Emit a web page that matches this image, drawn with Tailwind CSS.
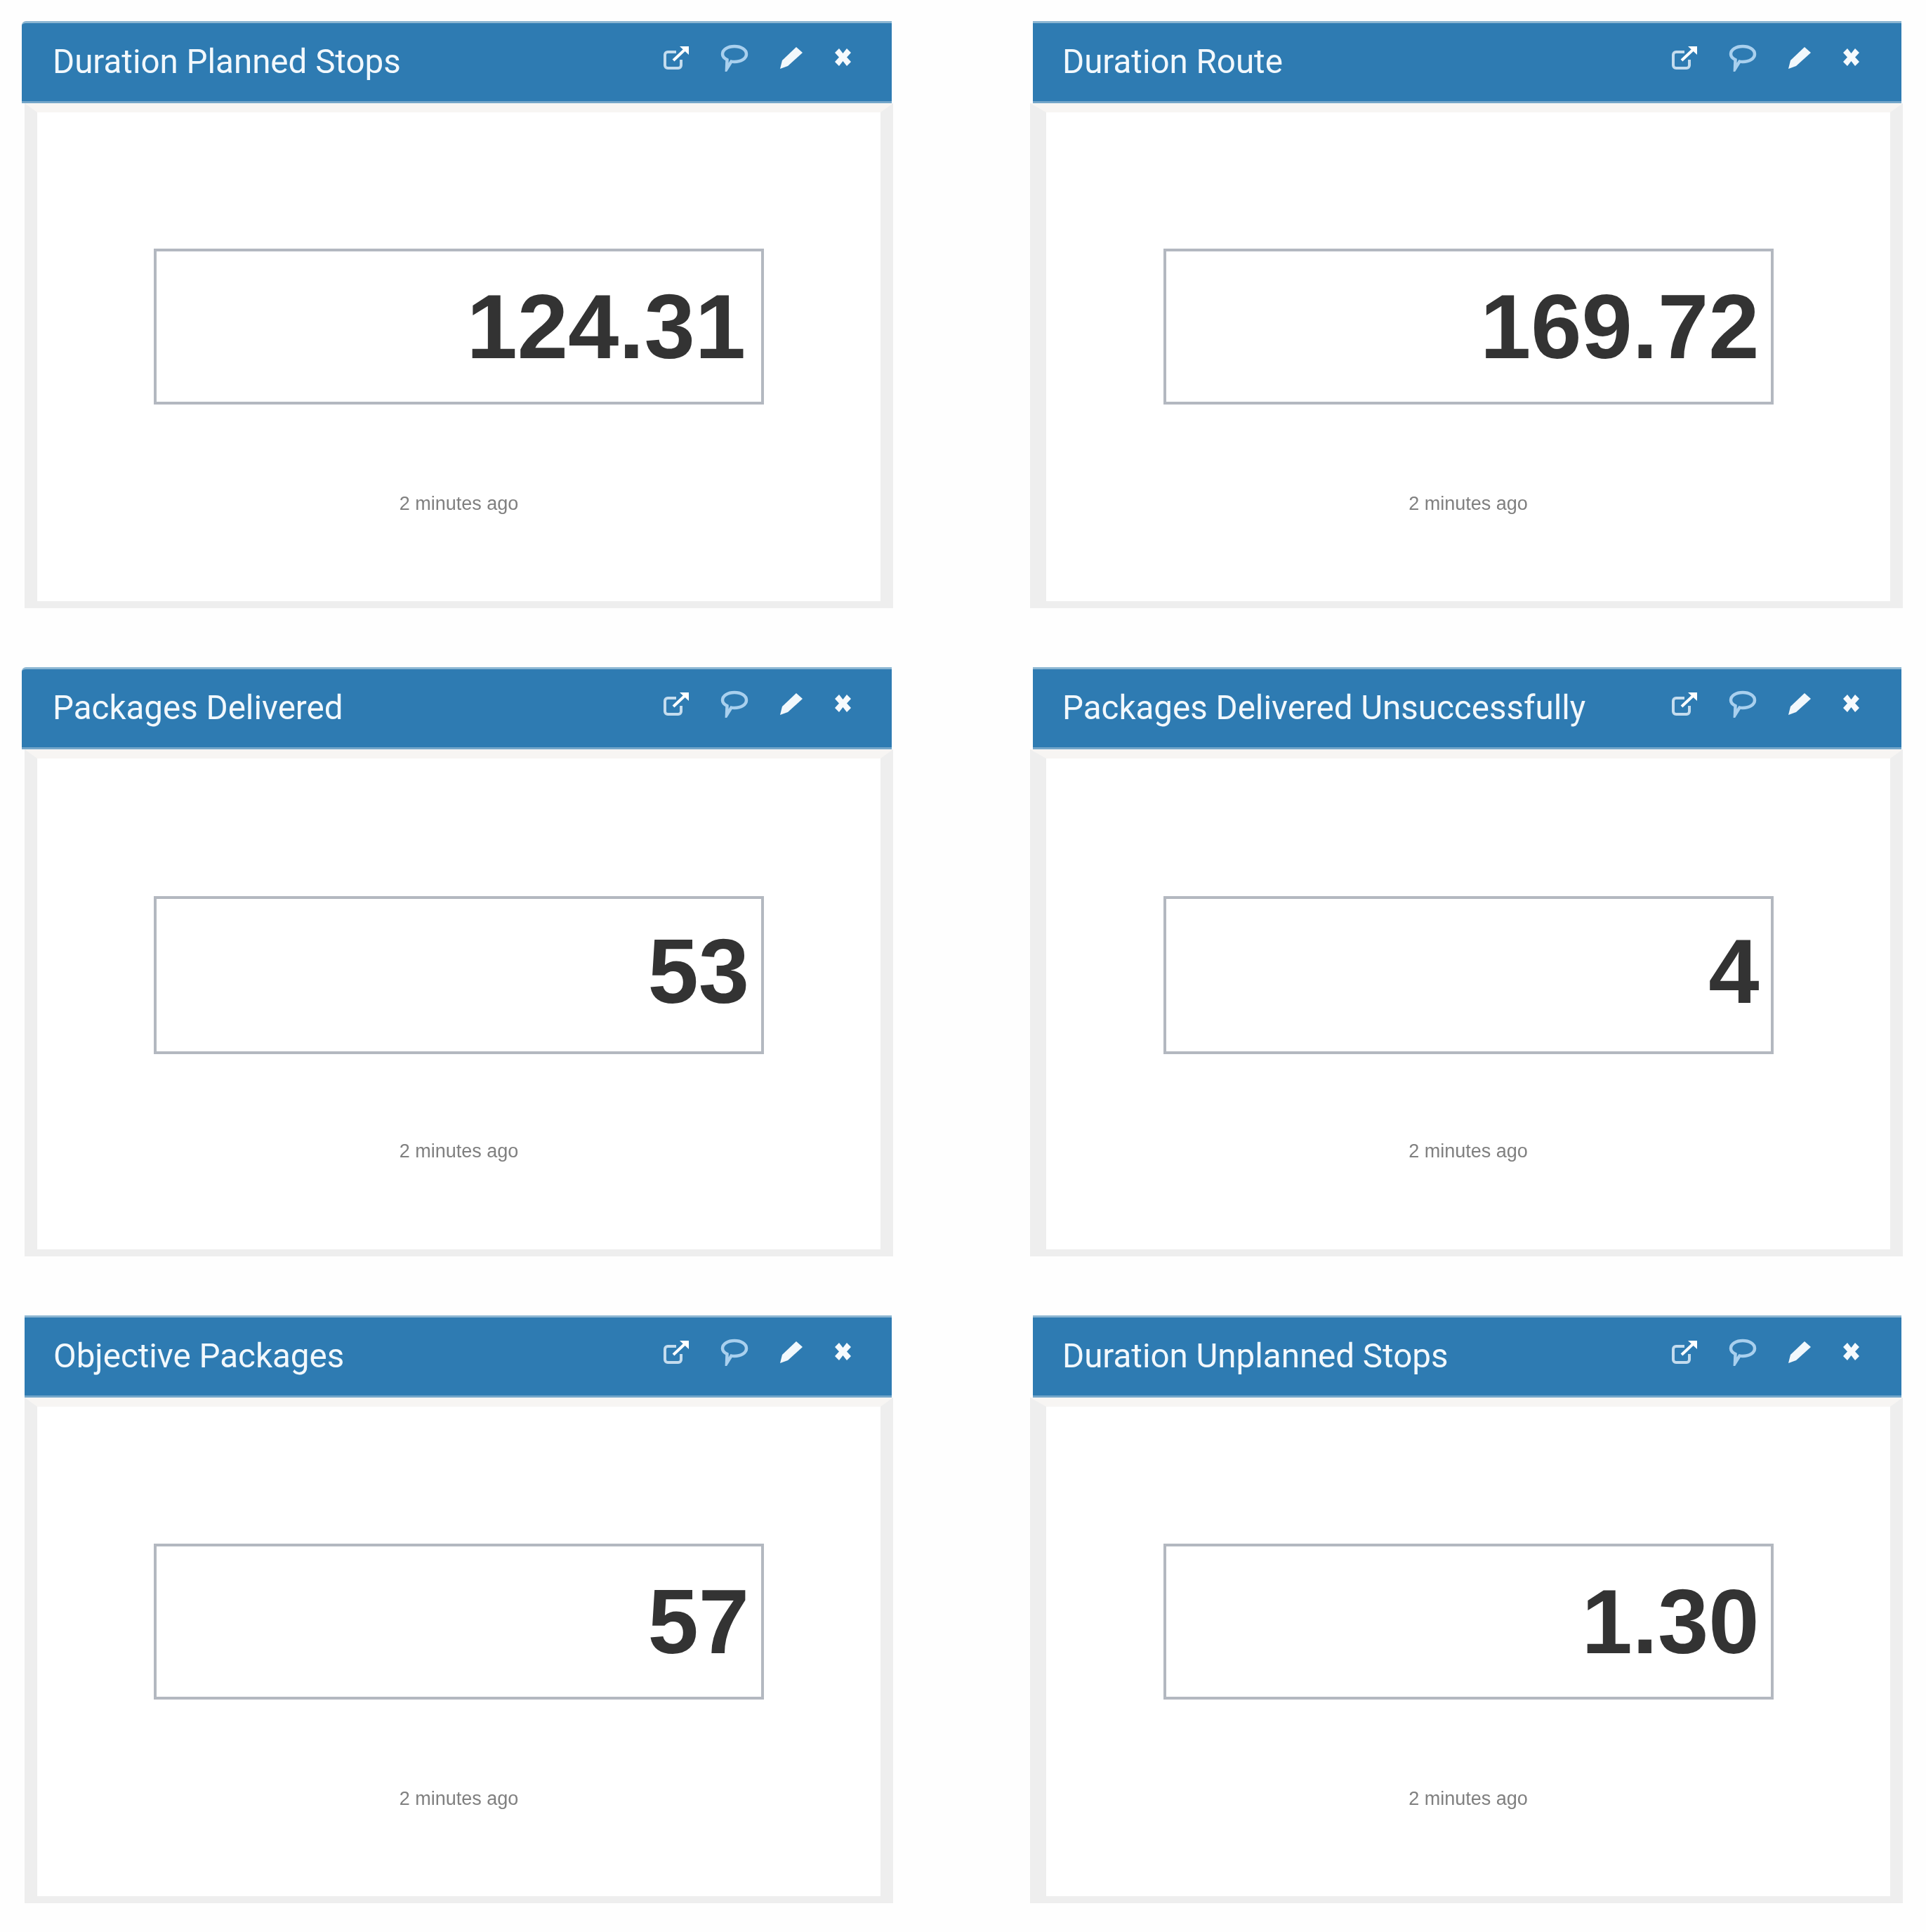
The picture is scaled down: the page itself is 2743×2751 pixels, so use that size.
<!DOCTYPE html>
<html lang="en">
<head>
  <meta charset="UTF-8" />
  <title>Route dashboard</title>
  <script src="https://cdn.jsdelivr.net/npm/@tailwindcss/browser@4"></script>
</head>
<body class="bg-[#fefefe] font-['Roboto',sans-serif]">

<div id="grid" class="grid grid-cols-[1241px_1241px] grid-rows-[836px_839px_837px] gap-x-[196px] gap-y-[84px] pl-[31px] pt-[30px] w-[2743px] h-[2751px] content-start"></div>

<script>
// header and body edges differ a little per column in the screenshot
const left = { head: 'mr-[2px] pl-[44px] pr-[57px] rounded-tl-md', body: 'ml-[4px] border-l-[18px]' };
const leftPlain = { head: 'ml-[4px] mr-[2px] pl-[41px] pr-[57px]', body: 'ml-[4px] border-l-[18px]' };
const right = { head: 'ml-[3px] mr-[1px] pl-[42px] pr-[59px]', body: 'ml-[-1px] mr-[-1px] border-l-[23px]' };

const cards = [
  ['Duration Planned Stops', '124.31', left, 'h-[222px] pr-[22px]'],
  ['Duration Route', '169.72', right, 'h-[222px] pr-[16px]'],
  ['Packages Delivered', '53', left, 'h-[225px] -mb-[3px] pb-[11px] pr-[17px]'],
  ['Packages Delivered Unsuccessfully', '4', right, 'h-[225px] -mb-[3px] pb-[11px] pr-[16px]'],
  ['Objective Packages', '57', leftPlain, 'h-[222px] pr-[17px]'],
  ['Duration Unplanned Stops', '1.30', right, 'h-[222px] pr-[16px]'],
];

const icons = `
  <svg class="w-[38px] h-[35px]" viewBox="0 0 38 35" fill="none" stroke="#c4dcee" stroke-width="4">
    <path d="M26 21v8a4 4 0 0 1-4 4H7a4 4 0 0 1-4-4V14a4 4 0 0 1 4-4h12"/>
    <path d="M15 22 32 6" stroke="#fff" stroke-width="4"/>
    <path d="M24 2h13v12z" fill="#fff" stroke="none"/>
  </svg>
  <svg class="w-[40px] h-[40px]" viewBox="0 0 40 40" fill="none" stroke="#a9d0ee" stroke-width="4.5">
    <path d="M20 4c9.500 0 17 4.700 17 11s-7.500 11-17 11c-1.500 0-3 0-4.500-.4L9 36l.5-13C5.500 21 3 18.300 3 15 3 8.700 10.500 4 20 4z"/>
  </svg>
  <svg class="w-[34px] h-[34px]" viewBox="0 0 34 34" fill="#f2f8fc">
    <path d="M24 2 33 10 12 29 1 33 4 21z"/>
  </svg>
  <svg class="w-[25px] h-[27px]" viewBox="0 0 25 27" fill="#f6fafd">
    <path d="M7 1 12.500 8 18 1 24 7 18 13.500 24 20 18 26 12.500 19 7 26 1 20 7 13.500 1 7z"/>
  </svg>`;

document.getElementById('grid').innerHTML = cards.map(([title, value, col, box]) => `
  <section class="flex flex-col h-full">
    <header class="h-[117px] shrink-0 flex items-center bg-[#2e7bb2] border-y-[3px] border-t-[#8cb6d2] border-b-[#74a6c9] ${col.head}">
      <h2 class="text-[47.5px] leading-none text-[#f2f8fc] blur-[0.6px]">${title}</h2>
      <div class="ml-auto flex items-center gap-x-[44px] -mt-[14px] blur-[0.7px]">${icons}</div>
    </header>
    <div class="flex-1 flex flex-col items-center justify-center bg-white border-r-[18px] border-b-[10px] border-t-[13px] border-l-[#eeeeee] border-r-[#eeeeee] border-b-[#eeeeee] border-t-[#f7f5f3] pt-[71px] ${col.body}">
      <div class="w-[869px] shrink-0 flex items-center justify-end border-[4px] border-[#b3b8c0] ${box}">
        <span class="font-['Liberation_Sans',sans-serif] font-bold text-[130px] leading-none text-[#333333] blur-[0.7px]">${value}</span>
      </div>
      <p class="mt-[125px] font-['Liberation_Sans',sans-serif] text-[27px] leading-[32px] text-[#808080] blur-[0.7px]">2 minutes ago</p>
    </div>
  </section>`).join('');
</script>

</body>
</html>
